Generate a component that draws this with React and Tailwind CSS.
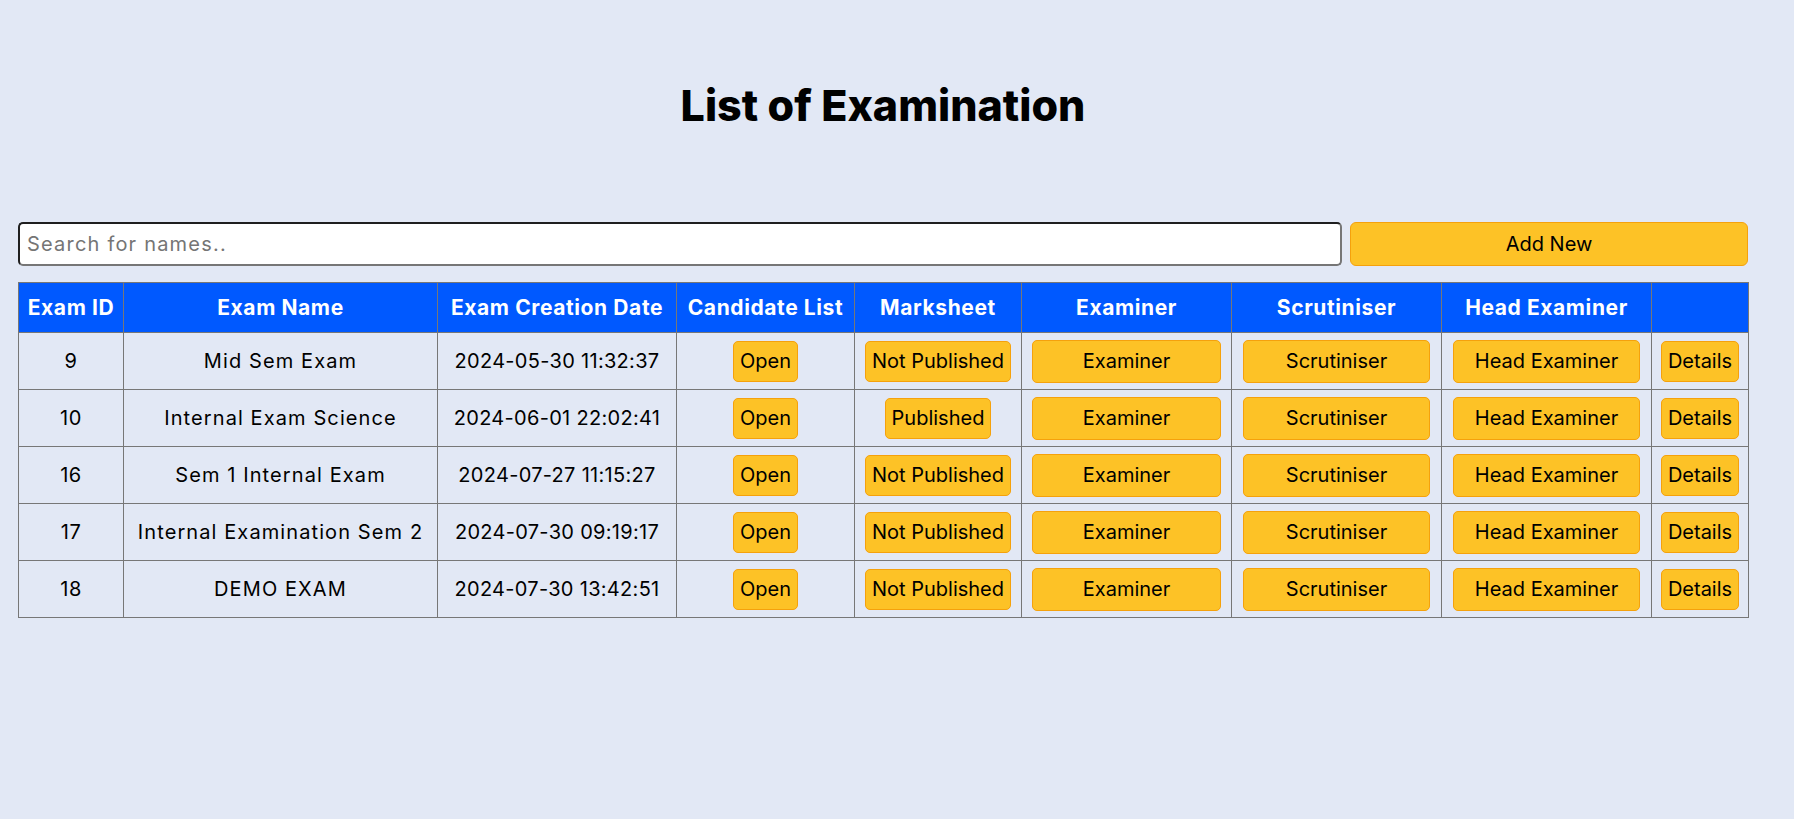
import React from "react";

const exams = [
  { id: 9, name: "Mid Sem Exam", date: "2024-05-30 11:32:37", published: false },
  { id: 10, name: "Internal Exam Science", date: "2024-06-01 22:02:41", published: true },
  { id: 16, name: "Sem 1 Internal Exam", date: "2024-07-27 11:15:27", published: false },
  { id: 17, name: "Internal Examination Sem 2", date: "2024-07-30 09:19:17", published: false },
  { id: 18, name: "DEMO EXAM", date: "2024-07-30 13:42:51", published: false },
];

const cell = "border border-[#777] text-center align-middle";
const smallBtn =
  "h-[41px] px-[6px] rounded-[5px] border border-[#f5a10c] bg-[#fdc226] text-black text-[20px] tracking-normal";
const wideBtn =
  "w-full h-[43px] rounded-[5px] border border-[#f5a10c] bg-[#fdc226] text-black text-[20px] tracking-normal";

function ExamRow({ exam }) {
  return (
    <tr className="h-[57px]">
      <td className={`${cell} tracking-[0.6px]`}>{exam.id}</td>
      <td className={`${cell} tracking-[1.1px]`}>{exam.name}</td>
      <td className={`${cell} tracking-[0.3px]`}>{exam.date}</td>
      <td className={cell}>
        <button className={smallBtn}>Open</button>
      </td>
      <td className={cell}>
        <button className={smallBtn}>{exam.published ? "Published" : "Not Published"}</button>
      </td>
      <td className={`${cell} px-[10px]`}>
        <button className={wideBtn}>Examiner</button>
      </td>
      <td className={`${cell} px-[11px]`}>
        <button className={wideBtn}>Scrutiniser</button>
      </td>
      <td className={`${cell} px-[11px]`}>
        <button className={wideBtn}>Head Examiner</button>
      </td>
      <td className={cell}>
        <button className={smallBtn}>Details</button>
      </td>
    </tr>
  );
}

export default function App() {
  return (
    <div className="min-h-screen bg-[#e2e8f5] pl-[18px] pr-[46px] font-['Inter',sans-serif] text-[20px] text-black">
      <h1 className="pt-[75px] h-[135px] leading-[60px] text-center text-[43px] font-extrabold">
        List of Examination
      </h1>

      <div className="mt-[87px] flex gap-2">
        <input
          type="text"
          placeholder="Search for names.."
          className="flex-1 h-[44px] px-[7px] rounded-[5px] border-2 border-t-[#1f1f1f] border-l-[#1f1f1f] border-b-[#767676] border-r-[#767676] bg-white text-[20px] tracking-[1.2px] placeholder:text-[#757575] outline-none"
        />
        <button className="w-[398px] h-[44px] rounded-[6px] border border-[#f5a10c] bg-[#fdc226] text-[20px]">
          Add New
        </button>
      </div>

      <table className="mt-[16px] w-full table-fixed border-collapse">
        <thead>
          <tr className="h-[50px] bg-[#0059ff] text-white text-[21px] font-extrabold tracking-[0.6px]">
            <th className={`${cell} w-[105px]`}>Exam ID</th>
            <th className={`${cell} w-[314px]`}>Exam Name</th>
            <th className={`${cell} w-[239px]`}>Exam Creation Date</th>
            <th className={`${cell} w-[178px]`}>Candidate List</th>
            <th className={`${cell} w-[167px]`}>Marksheet</th>
            <th className={`${cell} w-[210px]`}>Examiner</th>
            <th className={`${cell} w-[210px]`}>Scrutiniser</th>
            <th className={`${cell} w-[210px]`}>Head Examiner</th>
            <th className={`${cell} w-[97px]`}></th>
          </tr>
        </thead>
        <tbody>
          {exams.map((exam) => (
            <ExamRow key={exam.id} exam={exam} />
          ))}
        </tbody>
      </table>
    </div>
  );
}
